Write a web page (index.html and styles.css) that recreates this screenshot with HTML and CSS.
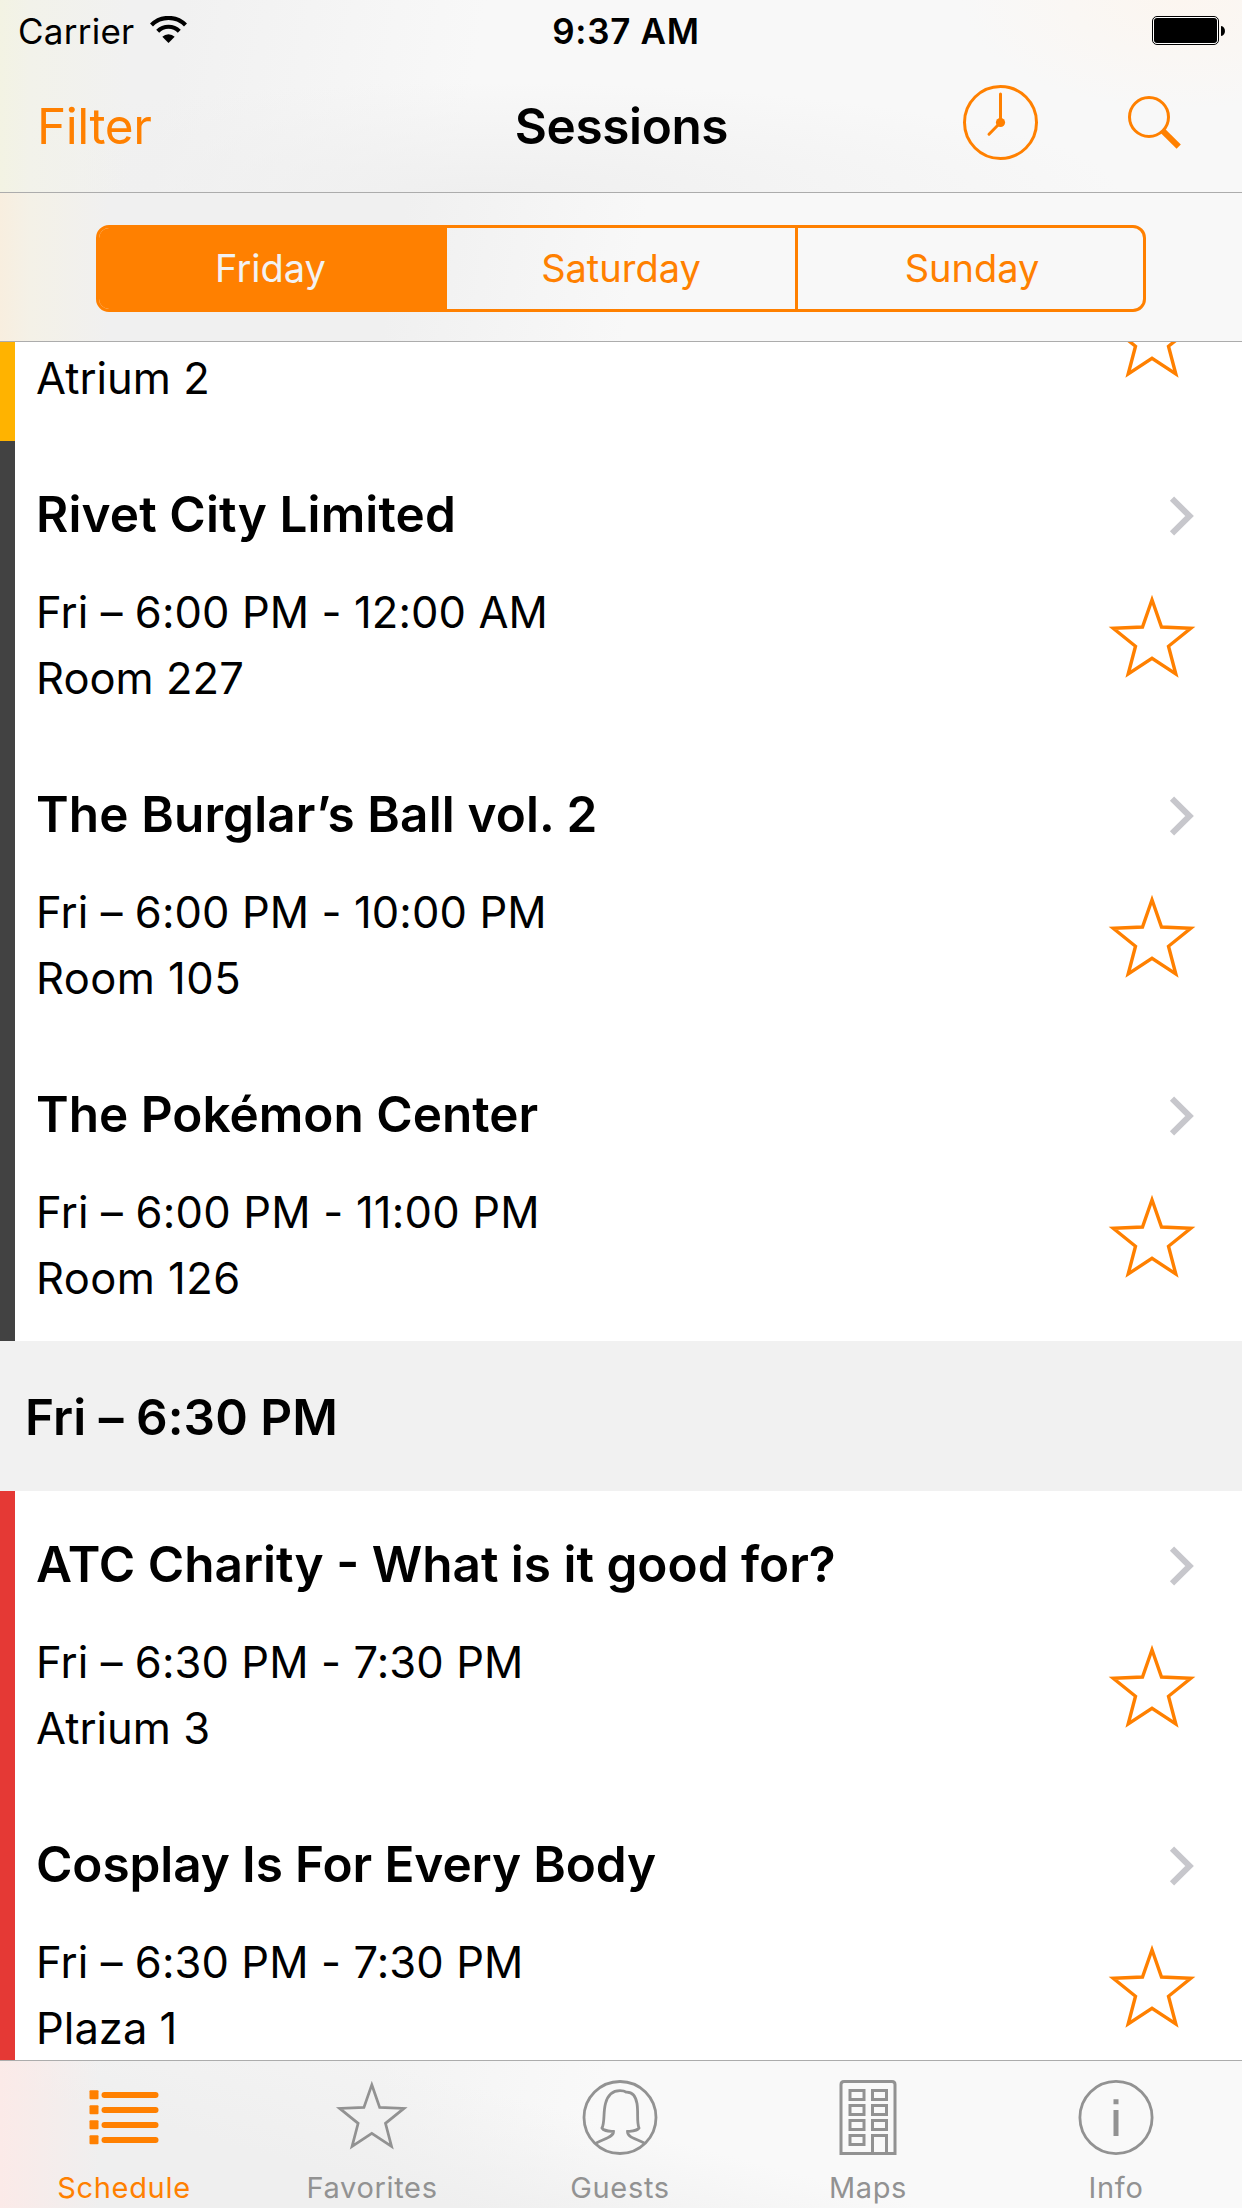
FILE: index.html
```html
<!DOCTYPE html>
<html lang="en">
<head>
<meta charset="utf-8">
<title>Sessions</title>
<link rel="stylesheet" href="styles.css">
</head>
<body>
<svg class="defs" aria-hidden="true">
  <symbol id="star" viewBox="0 0 88 86">
    <path d="M44 5.800 53.500 33 82.800 34.300 60.500 52.300 67.800 80 44 64.300 20.200 80 27.500 52.300 5.200 34.300 34.500 33Z" fill="none" stroke="currentColor" stroke-miterlimit="10"/>
  </symbol>
  <symbol id="chevron" viewBox="0 0 28 42">
    <path d="M4 3.700 21.600 21 4 38.300" fill="none" stroke="currentColor" stroke-width="6"/>
  </symbol>
</svg>
<div class="screen">
  <header class="top">
    <div class="status">
      <div class="status-left">
        <span class="carrier">Carrier</span>
        <svg class="wifi" viewBox="0 0 37 27"><path d="M1.500 9A24 24 0 0 1 35.500 9M7.700 15.200A15.300 15.300 0 0 1 29.300 15.200" fill="none" stroke="#000" stroke-width="4.200"/><path d="M12.300 20.700A8.800 8.800 0 0 1 24.700 20.700L18.500 27Z"/></svg>
      </div>
      <span class="clock">9:37 AM</span>
      <svg class="battery" viewBox="0 0 74 29"><rect x=".5" y=".5" width="66" height="28" rx="4.500" fill="#fff" stroke="#000"/><rect x="2" y="2" width="63" height="25" rx="3"/><path d="M69 10c5.300.5 5.300 9.500 0 10Z"/></svg>
    </div>
    <div class="nav">
      <a class="filter">Filter</a>
      <h1 class="title">Sessions</h1>
      <div class="actions">
        <svg class="now" viewBox="0 0 75 75"><circle cx="37.500" cy="37.500" r="36" fill="none" stroke="currentColor" stroke-width="3"/><path d="M37.500 9V37.500L26 49.200" fill="none" stroke="currentColor" stroke-width="3" stroke-linecap="round"/><circle cx="37.500" cy="37.500" r="4.600" fill="currentColor"/></svg>
        <svg class="search" viewBox="0 0 53 54"><circle cx="21" cy="21" r="19.500" fill="none" stroke="currentColor" stroke-width="3"/><path d="M34.300 34.300 50.700 50.700" stroke="currentColor" stroke-width="6"/></svg>
      </div>
    </div>
  </header>
  <div class="days">
    <div class="segments">
      <span class="seg seg-on">Friday</span>
      <span class="seg">Saturday</span>
      <span class="seg seg-last">Sunday</span>
    </div>
  </div>
  <main class="list">
    <article class="row row-cut amber">
      <div class="text"><p class="place">Atrium 2</p></div>
      <div class="side"><svg class="star"><use href="#star"/></svg></div>
    </article>
    <article class="row gray">
      <div class="text"><h2 class="name name-wide">Rivet City Limited</h2><p class="time">Fri – 6:00 PM - 12:00 AM</p><p class="place">Room 227</p></div>
      <div class="side"><svg class="chevron"><use href="#chevron"/></svg><svg class="star"><use href="#star"/></svg></div>
    </article>
    <article class="row gray">
      <div class="text"><h2 class="name name-wide">The Burglar’s Ball vol. 2</h2><p class="time">Fri – 6:00 PM - 10:00 PM</p><p class="place place-wide">Room 105</p></div>
      <div class="side"><svg class="chevron"><use href="#chevron"/></svg><svg class="star"><use href="#star"/></svg></div>
    </article>
    <article class="row gray">
      <div class="text"><h2 class="name">The Pokémon Center</h2><p class="time time-wide">Fri – 6:00 PM - 11:00 PM</p><p class="place place-wide">Room 126</p></div>
      <div class="side"><svg class="chevron"><use href="#chevron"/></svg><svg class="star"><use href="#star"/></svg></div>
    </article>
    <h2 class="section">Fri – 6:30 PM</h2>
    <article class="row red">
      <div class="text"><h2 class="name">ATC Charity - What is it good for?</h2><p class="time">Fri – 6:30 PM - 7:30 PM</p><p class="place">Atrium 3</p></div>
      <div class="side"><svg class="chevron"><use href="#chevron"/></svg><svg class="star"><use href="#star"/></svg></div>
    </article>
    <article class="row red">
      <div class="text"><h2 class="name name-tight">Cosplay Is For Every Body</h2><p class="time">Fri – 6:30 PM - 7:30 PM</p><p class="place">Plaza 1</p></div>
      <div class="side"><svg class="chevron"><use href="#chevron"/></svg><svg class="star"><use href="#star"/></svg></div>
    </article>
  </main>
  <nav class="tabs">
    <a class="tab tab-on">
      <svg class="tab-icon" viewBox="0 0 78 78" fill="currentColor"><g id="line"><rect x="4.500" y="11.300" width="9" height="9" rx="1"/><rect x="16.500" y="13" width="57" height="6" rx="3"/></g><use href="#line" y="15"/><use href="#line" y="30"/><use href="#line" y="45"/></svg>
      <span class="tab-label">Schedule</span>
    </a>
    <a class="tab">
      <svg class="tab-icon" viewBox="0 0 78 78"><use class="tab-star" href="#star" x="2.300" y="1" width="73" height="71.300"/></svg>
      <span class="tab-label">Favorites</span>
    </a>
    <a class="tab">
      <svg class="tab-icon" viewBox="0 0 78 78" fill="none" stroke="currentColor" stroke-width="2.800"><circle cx="39" cy="38.500" r="36"/><path d="M14.500 64.500C23 59.500 32.500 58.500 32.500 52.500C27 52 22.500 52 21 49C24 43 22 34 24.500 24.500C27 15 32 11.700 39 11.700C42 11.700 43.500 12 45.500 13.200C51 13 54.500 16.500 56 24.500C57.500 34 55.500 43 58 49C56.500 52 51.500 52 46.500 52.500C46.500 58.500 55 59.500 64 64.500"/></svg>
      <span class="tab-label">Guests</span>
    </a>
    <a class="tab">
      <svg class="tab-icon" viewBox="0 0 78 78" fill="none" stroke="currentColor" stroke-width="3"><path d="M12 74.500V5.500Q12 2.500 15 2.500H63Q66 2.500 66 5.500V74.500Z"/><g id="floor"><rect x="21" y="11.500" width="14" height="9"/><rect x="43.500" y="11.500" width="14" height="9"/></g><use href="#floor" y="15"/><use href="#floor" y="30"/><rect x="21" y="56.500" width="14" height="9"/><path d="M43.500 74.500V56.500H57.500V74.500"/></svg>
      <span class="tab-label">Maps</span>
    </a>
    <a class="tab">
      <svg class="tab-icon" viewBox="0 0 78 78"><circle cx="39" cy="38.500" r="36.100" fill="none" stroke="currentColor" stroke-width="2.800"/><path d="M36.500 20.300h5v5h-5ZM36.500 31h5v26h-5Z" fill="currentColor"/></svg>
      <span class="tab-label">Info</span>
    </a>
  </nav>
</div>
</body>
</html>
```
FILE: styles.css
```css
* { box-sizing: border-box; }

body {
  margin: 0;
  background: #fff;
  color: #000;
  font-family: Inter, "Noto Sans", sans-serif;
  font-size: 43.5px;
}

h1, h2, p { margin: 0; }
svg { display: block; flex: none; }

.defs { display: none; }

.screen {
  display: flex;
  flex-direction: column;
  width: 1242px;
  height: 2208px;
  overflow: hidden;
}

/* Status bar and navigation bar share one translucent background */
.top {
  flex: none;
  height: 193px;
  border-bottom: 1px solid #acacac;
  background:
    radial-gradient(ellipse 220px 110px at 1180px 0, #fcf6f0, rgba(252, 246, 240, 0)),
    linear-gradient(to right, #f3f3e3, #f2f2ea 30px, rgba(241, 241, 240, 0) 130px),
    radial-gradient(ellipse 640px 110px at 480px 192px, #efefef, rgba(240, 240, 240, 0)),
    linear-gradient(100deg, #f1f1f1 180px, #f8f8f8 480px);
}

.status {
  display: grid;
  grid-template-columns: 1fr auto 1fr;
  height: 62px;
  padding: 0 16px 0 18px;
  font-size: 35px;
  line-height: 62px;
}

.status-left { display: flex; }
.carrier { width: 132px; letter-spacing: .25px; }
.wifi { width: 37px; height: 27px; margin-top: 16px; }
.clock { padding-left: 8px; font-weight: 600; letter-spacing: .74px; }
.battery { width: 74px; height: 29px; margin-top: 16px; justify-self: end; }

.nav {
  display: grid;
  grid-template-columns: 1fr auto 1fr;
  height: 130px;
  padding: 0 61px 0 37px;
  color: #ff8000;
  font-size: 49.5px;
  line-height: 60px;
}

.filter { padding-top: 34px; letter-spacing: -.45px; }

.title {
  padding: 34px 0 0 25px;
  color: #000;
  font-size: 49.5px;
  font-weight: 600;
  letter-spacing: -.38px;
}

.actions { display: flex; justify-content: flex-end; gap: 90px; }
.now { width: 75px; height: 75px; margin-top: 23px; }
.search { width: 53px; height: 54px; margin-top: 34px; }

.days {
  flex: none;
  height: 149px;
  padding: 32px 96px 0;
  border-bottom: 1px solid #acacac;
  background:
    linear-gradient(to right, #f8eedf, #f4f1e7 30px, rgba(240, 240, 239, 0) 110px),
    linear-gradient(100deg, #f0f0f0 400px, #f8f8f8 640px);
}

.segments {
  display: flex;
  width: 1050px;
  height: 87px;
  overflow: hidden;
  border: 3px solid #ff8000;
  border-radius: 13px;
}

.seg {
  flex: 0 0 348px;
  color: #ff8000;
  font-size: 38px;
  line-height: 81px;
  text-align: center;
}

.seg-on { background: #ff8000; color: #f2f2f2; padding-right: 5px; }
.seg-last { border-left: 3px solid #ff8000; padding-left: 3px; }

.list { flex: 1; min-height: 0; overflow: hidden; }

.row {
  display: flex;
  justify-content: space-between;
  height: 300px;
  padding-right: 46px;
  border-left: 15px solid;
}

.amber { border-color: #ffb300; }
.gray { border-color: #424242; }
.red { border-color: #e53935; }

.text { padding: 43px 0 0 21px; white-space: nowrap; }

.name {
  margin-bottom: 35px;
  font-size: 49.5px;
  font-weight: 600;
  line-height: 60px;
}

.name-wide { letter-spacing: .12px; }
.name-tight { letter-spacing: -.1px; }
.time { line-height: 66px; letter-spacing: .1px; }
.time-wide { letter-spacing: .22px; }
.place { line-height: 66px; letter-spacing: .03px; }
.place-wide { letter-spacing: .45px; }

.side {
  display: flex;
  flex-direction: column;
  align-items: flex-end;
  gap: 57px;
  padding-top: 54px;
}

.chevron { width: 28px; height: 42px; color: #c7c7cc; }
.star { width: 88px; height: 86px; color: #ff8000; stroke-width: 3.4; }

/* Row scrolled partly under the day picker */
.row-cut { height: 99px; overflow: hidden; }
.row-cut .text { padding-top: 3px; }
.row-cut .side { padding-top: 0; margin-top: -48px; }

.section {
  height: 150px;
  padding-left: 25px;
  background: #f1f1f1;
  font-size: 49.5px;
  font-weight: 600;
  line-height: 152px;
  letter-spacing: .05px;
}

.tabs {
  display: flex;
  flex: none;
  height: 148px;
  padding-right: 2px;
  border-top: 1px solid #acacac;
  background:
    linear-gradient(to right, #fbeae8, rgba(243, 241, 240, 0) 100px),
    linear-gradient(15deg, #efefef 120px, rgba(243, 243, 243, 0) 240px) 0 0 / 100% 100%,
    linear-gradient(100deg, #f3f3f3 380px, #f9f9f9 600px);
}

.tab {
  display: flex;
  flex: 1;
  flex-direction: column;
  align-items: center;
  padding-top: 18px;
  color: #929292;
}

.tab-on { color: #ff8000; }
.tab-icon { width: 78px; height: 78px; }
.tab-star { stroke-width: 3.3; }

.tab-label {
  margin-top: 13px;
  font-size: 29px;
  line-height: 36px;
  letter-spacing: .67px;
}
```
